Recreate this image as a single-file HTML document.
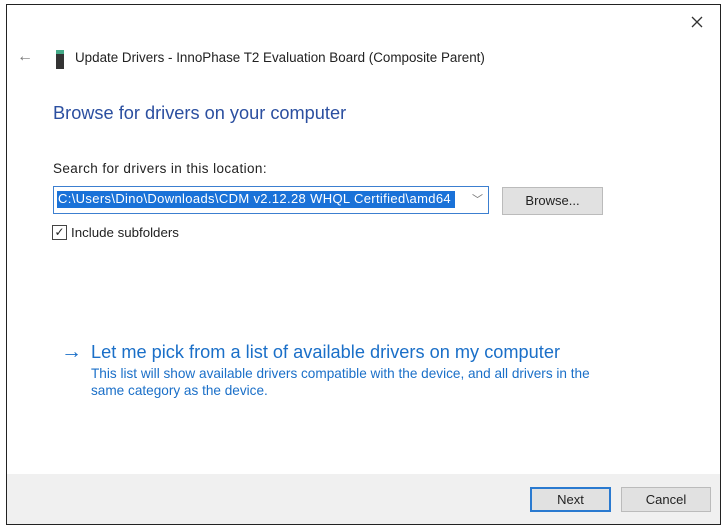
<!DOCTYPE html><html><head><style>
body{margin:0;width:726px;height:529px;background:#fff;font-family:"Liberation Sans",sans-serif;position:relative;overflow:hidden}
.a{position:absolute}
.t{font-size:12.5px;color:#222;white-space:nowrap}
</style></head><body>
<div class="a" style="left:6px;top:4px;width:713px;height:519px;border:1.5px solid #222;background:#fff"></div>
<div class="a" style="left:7px;top:474px;width:713px;height:50px;background:#f0f0f0"></div>
<svg class="a" style="left:691px;top:16px" width="12" height="12"><path d="M1 1L11 11M11 1L1 11" stroke="#333" stroke-width="1.3"/></svg>
<div class="a" style="left:17px;top:48px;font-size:16px;color:#777">←</div>
<div class="a" style="left:56px;top:50px;width:8px;height:15px;background:#333;border-top:4px solid #4a8"></div>
<div class="a t" style="left:75px;top:50px;font-size:13.4px">Update Drivers - InnoPhase T2 Evaluation Board (Composite Parent)</div>
<div class="a" style="left:53px;top:103px;font-size:18.2px;color:#2b4fa0;white-space:nowrap">Browse for drivers on your computer</div>
<div class="a t" style="left:53px;top:161px;font-size:13.5px;letter-spacing:0.4px">Search for drivers in this location:</div>
<div class="a" style="left:53px;top:186px;width:434px;height:26px;border:1px solid #3c7fd0;background:#fff"></div>
<div class="a" style="left:57px;top:191px;width:398px;height:17px;background:#1a72d8"></div>
<div class="a t" style="left:58px;top:191px;color:#fff;font-size:13px;letter-spacing:0.35px">C:\Users\Dino\Downloads\CDM v2.12.28 WHQL Certified\amd64</div>
<div class="a" style="left:472px;top:191px;color:#777;font-size:11px">﹀</div>
<div class="a" style="left:502px;top:187px;width:99px;height:26px;border:1px solid #bbb;background:#e1e1e1;text-align:center;line-height:26px;font-size:13px;color:#222">Browse...</div>
<div class="a" style="left:52px;top:225px;width:13px;height:13px;border:1px solid #444;font-size:12px;line-height:13px;text-align:center;color:#222">✓</div>
<div class="a t" style="left:71px;top:225px;font-size:13.3px">Include subfolders</div>
<div class="a" style="left:61px;top:340px;font-size:21px;color:#1a6fc8">→</div>
<div class="a" style="left:91px;top:342px;font-size:18.2px;color:#1a6fc8;white-space:nowrap">Let me pick from a list of available drivers on my computer</div>
<div class="a" style="left:91px;top:365px;font-size:13.6px;color:#1a6fc8;line-height:17px;white-space:nowrap">This list will show available drivers compatible with the device, and all drivers in the<br>same category as the device.</div>
<div class="a" style="left:530px;top:487px;width:77px;height:21px;border:2px solid #2a7ad0;background:#e1e1e1;text-align:center;line-height:21px;font-size:13px;color:#222">Next</div>
<div class="a" style="left:621px;top:487px;width:88px;height:23px;border:1px solid #bbb;background:#e1e1e1;text-align:center;line-height:23px;font-size:13px;color:#222">Cancel</div>
</body></html>
